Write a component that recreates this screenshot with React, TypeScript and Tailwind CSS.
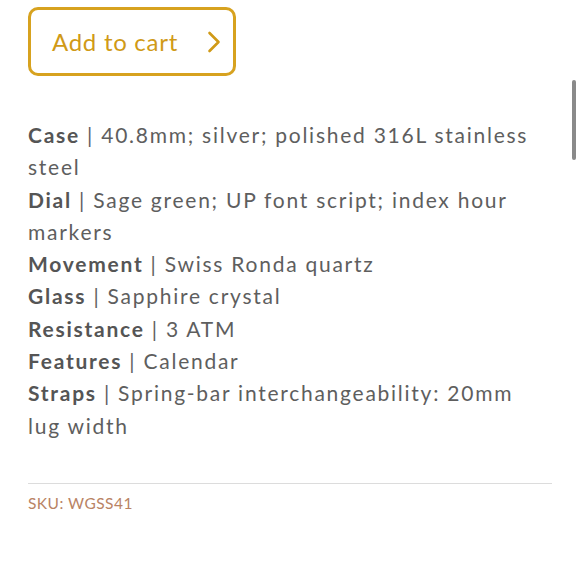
import React from "react";

const specs: [string, string][] = [
  ["Case", "40.8mm; silver; polished 316L stainless steel"],
  ["Dial", "Sage green; UP font script; index hour markers"],
  ["Movement", "Swiss Ronda quartz"],
  ["Glass", "Sapphire crystal"],
  ["Resistance", "3 ATM"],
  ["Features", "Calendar"],
  ["Straps", "Spring-bar interchangeability: 20mm lug width"],
];

export default function App() {
  return (
    <div className="relative w-[580px] h-[580px] bg-white overflow-hidden" style={{ fontFamily: "Lato, 'Open Sans', sans-serif" }}>
      <div className="pl-[28px] pr-[28px] pt-[7px]">
        <button className="flex items-center justify-between w-[208px] h-[69px] border-[3px] border-[#d7a21f] rounded-[10px] pl-[21px] pr-[12px] text-[#d09a17] text-[24px] tracking-[0.03em]">
          <span>Add to cart</span>
          <svg width="14" height="24" viewBox="0 0 14 24" fill="none">
            <path d="M2.5 3 L11.5 12 L2.5 21" stroke="#d09a17" strokeWidth="2.6" strokeLinecap="round" strokeLinejoin="round" />
          </svg>
        </button>
        <div className="mt-[43px] text-[21px] leading-[32.3px] tracking-[0.083em] text-[#5e5e5e]">
          {specs.map(([k, v]) => (
            <div key={k}>
              <span className="font-bold text-[#555]">{k}</span>
              <span> | {v}</span>
            </div>
          ))}
        </div>
        <div className="mt-[41px] border-t border-[#dcdcdc]" />
        <div className="mt-[8px] text-[15.5px] tracking-[0.03em] text-[#b98364]">SKU: WGSS41</div>
      </div>
      <div className="absolute left-[572px] top-[80px] w-[4px] h-[80px] rounded-full bg-[#8a8a8a]" />
    </div>
  );
}
